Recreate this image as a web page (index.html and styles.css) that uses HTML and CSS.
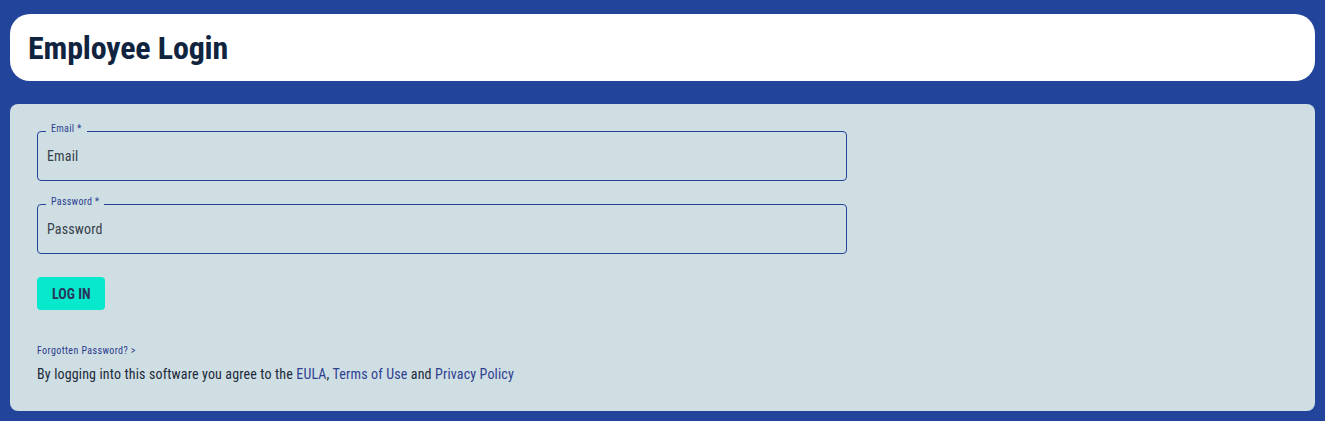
FILE: index.html
```html
<!DOCTYPE html>
<html>
<head>
<meta charset="utf-8">
<link rel="stylesheet" href="styles.css">
</head>
<body>
<header class="header-card">
  <h1 class="title">Employee Login</h1>
</header>
<main class="panel">
  <form class="form">
    <label class="field">
      <span class="field-label">Email *</span>
      <input class="field-input" type="email" placeholder="Email">
    </label>
    <label class="field">
      <span class="field-label">Password *</span>
      <input class="field-input" type="password" placeholder="Password">
    </label>
    <button class="btn" type="button">LOG IN</button>
  </form>
  <a class="forgot" href="#">Forgotten Password? &gt;</a>
  <p class="agree">By logging into this software you agree to the <a href="#">EULA</a>, <a href="#">Terms of Use</a> and <a href="#">Privacy Policy</a></p>
</main>
</body>
</html>
```
FILE: styles.css
```css
* { box-sizing: border-box; }
html, body { margin: 0; }
body {
  background: #22449a;
  padding: 14px 10px 11px;
  font-family: "Roboto Condensed", "Liberation Sans Narrow", "DejaVu Sans Condensed", Roboto, sans-serif;
  font-stretch: condensed;
  color: #1c2a3a;
  display: flex;
  flex-direction: column;
  gap: 23px;
}
.header-card {
  background: #fff;
  border-radius: 20px;
  height: 67px;
  display: flex;
  align-items: center;
  padding: 0 18px;
}
.title {
  margin: 0;
  font-size: 32px;
  font-weight: 700;
  color: #10243f;
  letter-spacing: -0.15px;
}
.panel {
  background: #cfdee3;
  border-radius: 8px;
  padding: 27px 27px 27px;
  display: flex;
  flex-direction: column;
}
.form {
  display: flex;
  flex-direction: column;
  gap: 23px;
  width: 810px;
  align-items: flex-start;
}
.field {
  position: relative;
  display: block;
  width: 810px;
}
.field-label {
  position: absolute;
  left: 9px;
  top: -9px;
  padding: 0 5px;
  font-size: 10px;
  letter-spacing: 0.3px;
  color: #2b3f8e;
  background: #cfdee3;
  line-height: 14px;
}
.field-input {
  display: block;
  width: 100%;
  height: 50px;
  border: 1px solid #22449a;
  border-radius: 4px;
  background: transparent;
  padding: 0 9px;
  font: inherit;
  font-size: 14px;
  letter-spacing: 0.15px;
  color: #1c2a3a;
  outline: none;
}
.field-input::placeholder { color: #36404a; opacity: 1; }
.btn {
  height: 33px;
  padding: 0 15px;
  background: #08e8cc;
  border: none;
  border-radius: 4px;
  font: inherit;
  font-size: 14px;
  font-weight: 700;
  color: #28375c;
  letter-spacing: 0;
}
.forgot {
  margin-top: 34px;
  font-size: 10px;
  letter-spacing: 0.4px;
  line-height: 14px;
  color: #2b3a8c;
  text-decoration: none;
  align-self: flex-start;
}
.agree {
  margin: 6px 0 0;
  font-size: 14px;
  letter-spacing: 0.15px;
  line-height: 20px;
}
.agree a { color: #2e4090; text-decoration: none; }
```
